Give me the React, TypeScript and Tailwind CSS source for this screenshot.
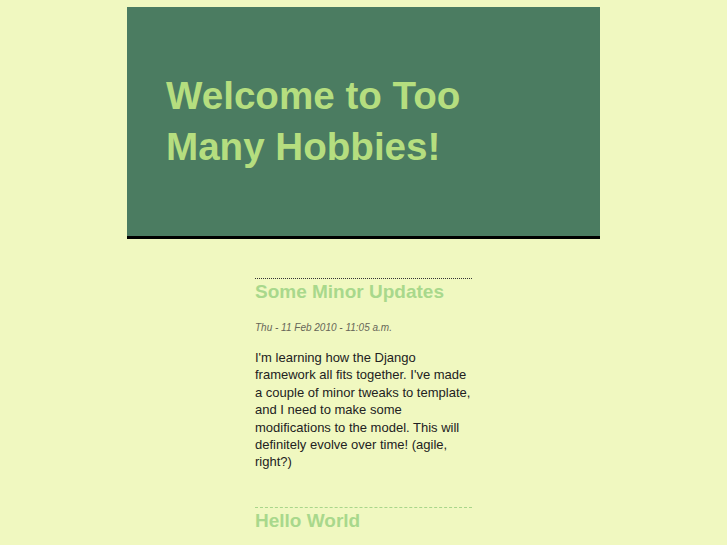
type Post = {
  title: string;
  date?: string;
  body?: string;
  rule: string;
};

const posts: Post[] = [
  {
    title: "Some Minor Updates",
    date: "Thu - 11 Feb 2010 - 11:05 a.m.",
    body: "I'm learning how the Django framework all fits together. I've made a couple of minor tweaks to template, and I need to make some modifications to the model. This will definitely evolve over time! (agile, right?)",
    rule: "border-t border-dotted border-[#333]",
  },
  {
    title: "Hello World",
    rule: "border-t border-dashed border-[#a8d68a]",
  },
];

function PostEntry({ post }: { post: Post }) {
  return (
    <div className={post.rule}>
      <h2 className="pt-[1px] text-[19px] leading-[23px] font-bold text-[#a9d88c]">
        {post.title}
      </h2>
      {post.date && (
        <p className="mt-[18px] text-[10px] leading-[14px] italic text-[#666658]">
          {post.date}
        </p>
      )}
      {post.body && (
        <p className="mt-[14px] text-[13px] leading-[17.4px] text-[#222]">
          {post.body}
        </p>
      )}
    </div>
  );
}

export default function App() {
  return (
    <div
      className="min-h-screen bg-[#f0f8c0] pt-[7px] overflow-hidden"
      style={{ fontFamily: '"Liberation Sans", Arial, sans-serif' }}
    >
      <div className="mx-auto w-[473px] h-[232px] bg-[#4b7c61] border-b-[3px] border-black pt-[63px] pl-[39px]">
        <h1 className="w-[330px] text-[38.6px] leading-[51px] font-bold text-[#b5de7f]">
          Welcome to Too Many Hobbies!
        </h1>
      </div>
      <div className="mx-auto w-[217px] mt-[39px] flex flex-col gap-[36px]">
        {posts.map((p) => (
          <PostEntry key={p.title} post={p} />
        ))}
      </div>
    </div>
  );
}
